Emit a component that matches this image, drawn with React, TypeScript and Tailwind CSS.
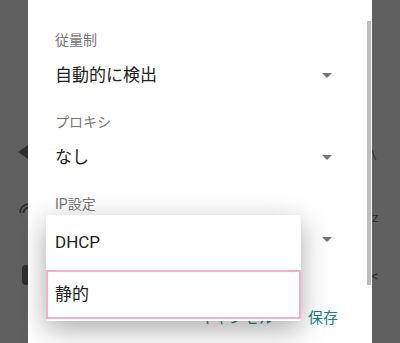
const FONT = "font-['Roboto','Noto_Sans_CJK_JP',sans-serif]"

const Arrow = () => (
  <svg width="10" height="5" viewBox="0 0 10 5" className="shrink-0">
    <polygon points="0,0 10,0 5,5" fill="#757575" />
  </svg>
)

const Field = ({ label, value, first }: { label: string; value: string; first?: boolean }) => (
  <div className={first ? '' : 'mt-[11px]'}>
    <div className="h-5 leading-5 text-[14px] text-[#757575]">{label}</div>
    <div className="h-[51px] flex items-center justify-between">
      <span className="text-[17px] text-[#212121]">{value}</span>
      <Arrow />
    </div>
  </div>
)

export default function App() {
  return (
    <div className={`relative w-[400px] h-[343px] overflow-hidden bg-[#606060] ${FONT}`}>
      {/* bits of the page behind the dialog */}
      <svg className="absolute left-[18px] top-[145px]" width="10" height="14" viewBox="0 0 10 14">
        <polygon points="0,7 10,0 10,14" fill="#2e2e2e" />
      </svg>
      <svg className="absolute left-[17px] top-[200px]" width="12" height="14" viewBox="0 0 12 14">
        <path d="M3 13 A9 9 0 0 1 12 4 M6.5 13 A5.5 5.5 0 0 1 12 7.5" stroke="#2e2e2e" strokeWidth="2" fill="none" />
      </svg>
      <div className="absolute left-[22px] top-[265px] w-[8px] h-[20px] rounded-sm bg-[#2e2e2e]" />
      <div className="absolute left-[371px] top-[145px] text-[13px] text-[#2e2e2e]">\</div>
      <div className="absolute left-[372px] top-[208px] text-[13px] text-[#2e2e2e]">z</div>
      <div className="absolute left-[371px] top-[265px] text-[15px] text-[#2e2e2e]">&lt;</div>

      {/* dialog */}
      <div className="absolute left-[28px] top-0 w-[344px] h-[360px] bg-white">
        <div className="absolute right-[1px] top-[21px] w-[4px] h-[264px] bg-[#bdbdbd]" />
        <div className="pl-[27px] pr-[40px] pt-[30px]">
          <Field first label="従量制" value="自動的に検出" />
          <Field label="プロキシ" value="なし" />
          <Field label="IP設定" value="DHCP" />
        </div>
        <div className="flex justify-end items-center gap-[34px] pr-[34px] mt-[43px] h-5 text-[15px] text-[#16877a]">
          <span>キャンセル</span>
          <span>保存</span>
        </div>
      </div>

      {/* dropdown menu */}
      <div className="absolute left-[46px] top-[215px] w-[255px] bg-white rounded-[2px] shadow-[0_8px_28px_rgba(0,0,0,0.34)]">
        <div className="h-[55px] flex items-center pl-[9px] text-[17px] text-[#212121]">DHCP</div>
        <div className="h-[49px] flex items-center pl-[7px] border-2 border-[#f9aec8] text-[17px] text-[#212121]">
          静的
        </div>
        <div className="h-[2px]" />
      </div>
    </div>
  )
}
